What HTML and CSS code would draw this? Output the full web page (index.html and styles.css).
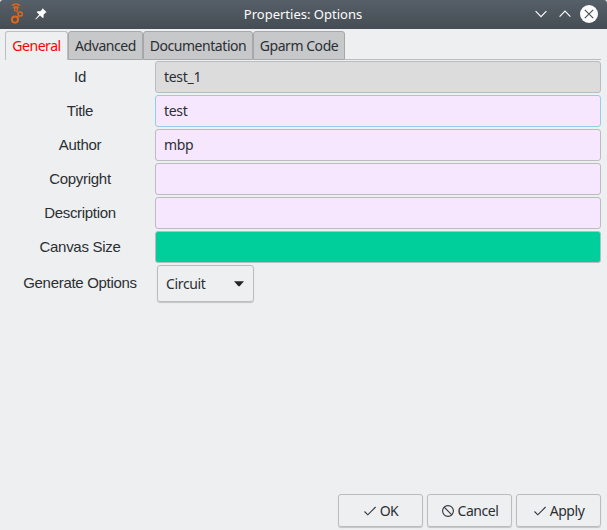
FILE: index.html
```html
<!DOCTYPE html>
<html lang="en">
<head>
<meta charset="utf-8">
<title>Properties: Options</title>
<link rel="stylesheet" href="styles.css">
</head>
<body>
<div class="window">
  <header class="titlebar">
    <div class="title-left">
      <svg class="app-icon" width="16" height="22" viewBox="0 0 16 22" fill="none" stroke="#e2661a">
        <path d="M3.8 2.8Q8 -.8 12.2 2.8M5.3 4.8Q8 2.6 10.7 4.8" stroke-width="1.5"/>
        <circle cx="8" cy="6.4" r="1.6" stroke-width="1.2"/>
        <circle cx="12.2" cy="11" r="2.1" stroke-width="1.5"/>
        <circle cx="7" cy="16.6" r="3.1" stroke-width="2"/>
        <path d="M8.4 8.2L10.3 9.8M10.8 12.6L9.3 14.4" stroke-width="1"/>
      </svg>
      <svg class="pin" width="12" height="12" viewBox="0 0 12 12" fill="#fff">
        <path d="M7.6.2L11.6 4.2L10.5 4.8L8.6 6.7L8.6 9.4L7.7 10L5 7.4L.9 11.5L.3 11.1L4.2 6.6L1.8 4.2L2.5 3.3L5.2 3.3L7.1 1.4Z"/>
      </svg>
    </div>
    <h1 class="title">Properties: Options</h1>
    <div class="title-right">
      <svg width="12" height="8" viewBox="0 0 12 8" fill="none" stroke="#fcfcfc" stroke-width="1.2"><path d="M.6 1.2L6 6.6L11.4 1.2"/></svg>
      <svg width="12" height="8" viewBox="0 0 12 8" fill="none" stroke="#fcfcfc" stroke-width="1.2"><path d="M.6 6.6L6 1.2L11.4 6.6"/></svg>
      <svg width="18" height="18" viewBox="0 0 18 18"><circle cx="9" cy="9" r="9" fill="#fcfcfc"/><path d="M4.8 4.8L13.2 13.2M13.2 4.8L4.8 13.2" stroke="#4b545c" stroke-width="1.2"/></svg>
    </div>
  </header>
  <nav class="tabs">
    <div class="tab tab-general active">General</div>
    <div class="tab tab-advanced">Advanced</div>
    <div class="tab tab-documentation">Documentation</div>
    <div class="tab tab-code">Gparm Code</div>
    <div class="tab-rest"></div>
  </nav>
  <main class="form">
    <div class="row"><div class="label">Id</div><div class="field readonly">test_1</div></div>
    <div class="row"><div class="label">Title</div><div class="field focused">test</div></div>
    <div class="row"><div class="label">Author</div><div class="field">mbp</div></div>
    <div class="row"><div class="label">Copyright</div><div class="field"></div></div>
    <div class="row"><div class="label">Description</div><div class="field"></div></div>
    <div class="row"><div class="label">Canvas Size</div><div class="field green"></div></div>
    <div class="row row-options"><div class="label">Generate Options</div>
      <div class="combo"><span>Circuit</span><svg width="10" height="6" viewBox="0 0 10 6"><path d="M0 .2H10L5.6 5.2H4.4Z" fill="#232627"/></svg></div>
    </div>
  </main>
  <footer class="actions">
    <div class="button"><svg width="12" height="12" viewBox="0 0 12 12" fill="none" stroke="#31363b" stroke-width="1.1"><path d="M.5 6.5L3.8 9.8L11.6 2"/></svg>OK</div>
    <div class="button"><svg width="12" height="12" viewBox="0 0 12 12" fill="none" stroke="#31363b" stroke-width="1.1"><circle cx="6" cy="6" r="5.4"/><path d="M2.2 2.2L9.8 9.8"/></svg>Cancel</div>
    <div class="button"><svg width="12" height="12" viewBox="0 0 12 12" fill="none" stroke="#31363b" stroke-width="1.1"><path d="M.5 6.5L3.8 9.8L11.6 2"/></svg>Apply</div>
  </footer>
</div>
</body>
</html>
```
FILE: styles.css
```css
* { box-sizing: border-box; }
body {
  margin: 0;
  font: 14px/18px "Noto Sans", sans-serif;
  letter-spacing: -.45px;
  color: #2b2f33;
  background: #eff0f1;
}
.window {
  height: 530px;
  display: flex;
  flex-direction: column;
  background: #eeeff1;
  overflow: hidden;
}
.titlebar {
  height: 29px;
  flex: none;
  display: grid;
  grid-template-columns: 150px 1fr 150px;
  align-items: center;
  padding-bottom: 1px;
  color: #fcfcfc;
  background: linear-gradient(#566068, #454c54);
  border-radius: 3px 3px 0 0;
}
.title-left { display: flex; align-items: center; gap: 11px; padding-left: 8px; }
.title { margin: 0; padding-right: 1px; font-size: 13px; font-weight: 400; letter-spacing: 0; text-align: center; }
.title-right { display: flex; align-items: center; justify-content: flex-end; gap: 12px; padding-right: 9px; }
.title-right svg:last-child { margin-left: -3px; }
.tabs { display: flex; height: 31px; padding: 2px 6px 0 5px; flex: none; }
.tab {
  height: 29px;
  padding-top: 5px;
  text-align: center;
  background: #c7c8ca;
  border: 1px solid #a5a7a9;
  border-radius: 3px 3px 0 0;
}
.tab-general { width: 63px; }
.tab-advanced { width: 75px; }
.tab-documentation { width: 110px; }
.tab-code { width: 92px; }
.tab.active { color: #f00; background: #eeeff1; border-color: #bcbebf; border-bottom: 0; }
.tab-rest { flex: 1; border-bottom: 1px solid #b9bbbc; }
.form { flex: 1; display: flex; flex-direction: column; gap: 2px; padding: 1px 6px 0 5px; }
.row { display: grid; grid-template-columns: 150px 1fr; height: 32px; }
.label { font: 15px/32px "Liberation Sans", sans-serif; letter-spacing: -.3px; text-align: center; }
.field {
  padding: 6px 8px;
  letter-spacing: -.3px;
  background: #f6e7fe;
  border: 1px solid #babcbe;
  border-radius: 3px;
}
.field.readonly { background: #dcdcdc; }
.field.focused { border-color: #93cee9; }
.field.green { background: #00ce9b; }
.row-options { height: 37px; }
.row-options .label { line-height: 35px; }
.combo {
  width: 97px;
  margin-left: 2px;
  padding: 0 9px 0 8px;
  display: flex;
  align-items: center;
  justify-content: space-between;
  border: 1px solid #babcbe;
  border-radius: 3px;
  box-shadow: 0 1px 1px rgba(0, 0, 0, .18);
}
.combo span { letter-spacing: -.35px; }
.actions { display: flex; justify-content: flex-end; gap: 4px; padding: 0 6px 3px 0; }
.button {
  width: 85px;
  height: 33px;
  padding-left: 1px;
  display: flex;
  align-items: center;
  justify-content: center;
  gap: 4px;
  border: 1px solid #babcbe;
  border-radius: 3px;
  box-shadow: 0 1px 1px rgba(0, 0, 0, .18);
}
```
